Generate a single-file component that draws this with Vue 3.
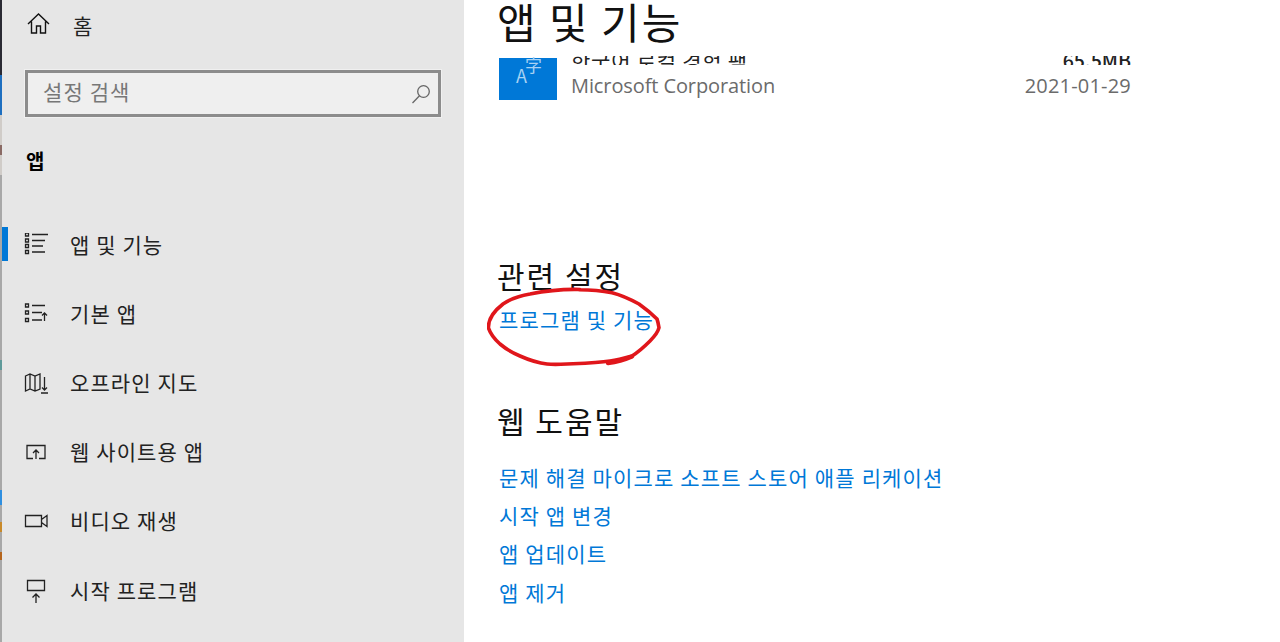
<template>
  <div class="window">
    <div class="edge">
      <span v-for="(c, i) in edgeBits" :key="i" :style="{ height: c.h + 'px', background: c.color }"></span>
    </div>

    <aside class="sidebar">
      <div class="home-row">
        <svg class="nav-icon" width="24" height="24" viewBox="0 0 24 24" fill="none" stroke="#111" stroke-width="1.4">
          <path d="M1 11 11.500 1 22 11M4.500 8.500v11.500h5v-7h4v7h5V8.500" />
        </svg>
        <span>홈</span>
      </div>

      <div class="search">
        <span class="search-text">설정 검색</span>
        <svg width="22" height="22" viewBox="0 0 22 22" fill="none" stroke="#666" stroke-width="1.3">
          <circle cx="13.500" cy="8.500" r="5.800" />
          <path d="M9.500 12.800 2.500 20" />
        </svg>
      </div>

      <div class="section-name">앱</div>

      <nav class="nav">
        <div v-for="item in navItems" :key="item.label" class="nav-item" :class="{ 'nav-item--on': item.active }">
          <svg class="nav-icon" width="24" height="24" viewBox="0 0 24 24" fill="none" stroke="#222" stroke-width="1.3" v-html="item.icon"></svg>
          <span class="nav-label">{{ item.label }}</span>
        </div>
      </nav>
    </aside>

    <main class="content">
      <h1 class="page-title">앱 및 기능</h1>

      <div class="app-row">
        <div class="app-tile">
          <span class="tile-a">A</span>
          <span class="tile-char">字</span>
        </div>
        <div class="app-info">
          <div class="clip-line"><span>한국어 로컬 경험 팩</span><span class="app-size">65.5MB</span></div>
          <div class="app-meta"><span>Microsoft Corporation</span><span class="app-date">2021-01-29</span></div>
        </div>
      </div>

      <section class="related">
        <h2>관련 설정</h2>
        <div class="link-wrap">
          <a class="link">프로그램 및 기능</a>
          <svg class="scribble" width="180" height="84" viewBox="0 0 180 84" fill="none" stroke="#e0161b" stroke-width="3.6" stroke-linecap="round">
            <path d="M93 4.500C75 4 58 6 43 9 31 11 22 15 16 19 7 26 1 34 1.500 43c2 6 6 11 11.500 16 6 5 13 9 20 12 9 4 18 7 27 8 9 1 18 0 26-.3 13-.5 26-1 37-2.700 8-1 15-3 22-5 8-5 13-10 18-15 4-4 8-9 9-13.300-.5-3-1-6-2-8.700-5-5-11-10-18-15-9-5-18-9-27-11.300-10-2-22-3-33-3" />
            <path d="M121 78c8-1 16-3 24-6.500" stroke-width="4.400" />
          </svg>
        </div>
      </section>

      <section class="help">
        <h2>웹 도움말</h2>
        <div class="help-links">
          <a v-for="l in helpLinks" :key="l" class="link">{{ l }}</a>
        </div>
      </section>
    </main>
  </div>
</template>

<script setup>
const edgeBits = [
  { h: 75, color: '#2a2a33' },
  { h: 40, color: '#1e6fc0' },
  { h: 30, color: '#d0ccc8' },
  { h: 10, color: '#8a6a64' },
  { h: 20, color: '#d0ccc8' },
  { h: 185, color: '#a8a8a8' },
  { h: 10, color: '#5f9a9a' },
  { h: 120, color: '#a8a8a8' },
  { h: 15, color: '#2f8fe0' },
  { h: 17, color: '#a8a8a8' },
  { h: 10, color: '#c98a2a' },
  { h: 20, color: '#a8a8a8' },
  { h: 8, color: '#b5651d' },
  { h: 82, color: '#a8a8a8' }
]

const navItems = [
  {
    label: '앱 및 기능',
    active: true,
    icon: '<path d="M1.500 0h3v3h-3zM1.500 6h3v3h-3zM1.500 11.500h3v3h-3zM1.500 17.500h3v3h-3z"/><path d="M8 1.500h16M8 7.500h13M8 13h11M8 19h13"/>'
  },
  {
    label: '기본 앱',
    icon: '<path d="M1.500 2h3v3h-3zM1.500 9h3v3h-3zM1.500 16.500h3v3h-3z"/><path d="M8 3.500h13M8 10.500h10M8 18h10M20.500 19v-8M18 13.500l2.500-2.500 2.500 2.500"/>'
  },
  {
    label: '오프라인 지도',
    icon: '<path d="M1.500 5 6 3l5 2 5-2v15l-5 2-5-2-4.500 2zM6 3v15M11 5v15M20.500 6v13M18 16.500l2.500 2.500 2.500-2.500M17 22h7"/>'
  },
  {
    label: '웹 사이트용 앱',
    icon: '<path d="M9 18.500H3V5.500h18v13h-6M12 19v-9M9 13l3-3 3 3"/>'
  },
  {
    label: '비디오 재생',
    icon: '<path d="M1.500 6.500h16v11h-16zM17.500 10.500l5.500-4v11l-5.500-4"/>'
  },
  {
    label: '시작 프로그램',
    icon: '<path d="M3.500 1.500h17v10h-17zM12 24v-9M8.500 18.500 12 15l3.500 3.500"/>'
  }
]

const helpLinks = ['문제 해결 마이크로 소프트 스토어 애플 리케이션', '시작 앱 변경', '앱 업데이트', '앱 제거']
</script>

<style>
html, body {
  margin: 0;
  overflow: hidden;
}
</style>

<style scoped>
.window {
  display: flex;
  width: 1280px;
  height: 642px;
  overflow: hidden;
  background: #fff;
  color: #111;
  font-family: "Noto Sans CJK KR", "Noto Sans", sans-serif;
}

.edge {
  display: flex;
  flex-direction: column;
  width: 2px;
  flex: none;
}

.edge span {
  display: block;
}

.sidebar {
  width: 462px;
  flex: none;
  background: #e6e6e6;
  padding-left: 22px;
  box-sizing: border-box;
  display: flex;
  flex-direction: column;
}

.home-row,
.nav-item {
  display: flex;
  align-items: center;
  gap: 22px;
  font-size: 21px;
  letter-spacing: 1.1px;
  color: #222;
}

.home-row {
  height: 24px;
  margin-top: 13px;
  margin-left: 3px;
}

.nav-icon {
  flex: none;
}

.nav-label {
  margin-top: -2px;
}

.search {
  display: flex;
  align-items: center;
  justify-content: space-between;
  width: 416px;
  height: 47px;
  margin-top: 33px;
  margin-left: 1px;
  padding: 0 6px 0 15px;
  box-sizing: border-box;
  background: #efefef;
  border: 3px solid #8c8c8c;
  box-shadow: 0 0 0 1px #f0f0f0;
  font-size: 21px;
  color: #777;
  letter-spacing: 1.1px;
}

.search-text {
  margin-top: -5px;
}

.section-name {
  margin-top: 30px;
  margin-left: 2px;
  font-size: 20px;
  font-weight: 700;
  line-height: 28px;
  color: #000;
}

.nav {
  display: flex;
  flex-direction: column;
  margin-top: 35px;
}

.nav-item {
  height: 69.2px;
  position: relative;
}

.nav-item--on::before {
  content: '';
  position: absolute;
  left: -22px;
  top: 17px;
  width: 6px;
  height: 34px;
  background: #0078d7;
}

.content {
  flex: 1;
  padding-left: 35px;
  min-width: 0;
}

.page-title {
  margin: -8px 0 0 -2px;
  font-size: 42px;
  font-weight: 400;
  line-height: 58px;
  letter-spacing: 2px;
  color: #111;
}

.app-row {
  display: flex;
  gap: 14px;
  width: 632px;
  height: 47px;
  margin-top: 3px;
  overflow: hidden;
}

.app-tile {
  position: relative;
  width: 58px;
  height: 42px;
  margin-top: 5px;
  flex: none;
  background: #0078d7;
  color: #a9d2f3;
}

.tile-a {
  position: absolute;
  left: 17px;
  top: 6px;
  font-size: 18px;
  line-height: 22px;
}

.tile-char {
  position: absolute;
  left: 26px;
  top: -3px;
  font-size: 17px;
  line-height: 20px;
}

.app-info {
  flex: 1;
  min-width: 0;
  display: flex;
  flex-direction: column;
}

.clip-line {
  display: flex;
  justify-content: space-between;
  height: 9px;
  margin-top: 3px;
  overflow: hidden;
  align-items: flex-end;
  font-size: 21px;
  line-height: 28px;
  letter-spacing: 0.75px;
  color: #222;
}

.clip-line span {
  display: block;
  margin-bottom: -9px;
}

.app-size {
  font-size: 19.500px;
  letter-spacing: 0;
  font-weight: 500;
}

.app-meta {
  display: flex;
  justify-content: space-between;
  margin-top: 8px;
  font-family: "Open Sans", "Noto Sans", sans-serif;
  font-size: 20px;
  line-height: 26px;
  letter-spacing: -0.1px;
  color: #6b6b6b;
}

.app-date {
  letter-spacing: 0.2px;
}

.related {
  margin-top: 155px;
}

h2 {
  margin: 0 0 0 -2px;
  font-size: 30px;
  font-weight: 400;
  line-height: 40px;
  letter-spacing: 2px;
  color: #111;
}

.link-wrap {
  position: relative;
  margin-top: 10px;
}

.link {
  display: block;
  font-size: 21px;
  line-height: 28px;
  letter-spacing: 1.15px;
  color: #0078d7;
}

.scribble {
  position: absolute;
  left: -12px;
  top: -20px;
  pointer-events: none;
}

.help {
  margin-top: 67px;
}

.help-links {
  display: flex;
  flex-direction: column;
  gap: 10.200px;
  margin-top: 23px;
}
</style>
